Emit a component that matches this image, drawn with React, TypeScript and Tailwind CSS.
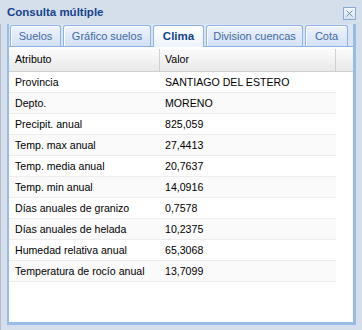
import { X } from "lucide-react";

const rows: [string, string][] = [
  ["Provincia", "SANTIAGO DEL ESTERO"],
  ["Depto.", "MORENO"],
  ["Precipit. anual", "825,059"],
  ["Temp. max anual", "27,4413"],
  ["Temp. media anual", "20,7637"],
  ["Temp. min anual", "14,0916"],
  ["Días anuales de granizo", "0,7578"],
  ["Días anuales de helada", "10,2375"],
  ["Humedad relativa anual", "65,3068"],
  ["Temperatura de rocío anual", "13,7099"],
];

const tabs = [
  { label: "Suelos", w: "w-[51px]" },
  { label: "Gráfico suelos", w: "w-[88px]" },
  { label: "Clima", w: "w-[51px]", active: true },
  { label: "Division cuencas", w: "w-[97px]" },
  { label: "Cota", w: "w-[43px]" },
];

export default function App() {
  return (
    <div className="flex h-[330px] w-[362px] flex-col bg-[#d5dfeb] font-['Liberation_Sans',Arial,sans-serif] text-[11px] text-black">
      {/* window header */}
      <div className="flex h-[24px] items-center justify-between pl-[7px] pr-[6px] pt-[2px]">
        <span className="text-[11.5px] font-bold text-[#15428b]">Consulta múltiple</span>
        <button className="flex h-[13px] w-[13px] items-center justify-center border border-[#8aa8d0] bg-gradient-to-b from-[#f3f7fd] to-[#d5e2f3]">
          <X size={11} strokeWidth={1.6} className="text-[#4b6a94]" />
        </button>
      </div>

      <div className="flex flex-1 border-l border-[#b3bcc8] pb-[5px] pl-[6px] pr-[6px]">
        <div className="flex flex-1 flex-col border-b-[3px] border-l-2 border-r-[3px] border-[#99bbe8]">
          {/* tab strip */}
          <div className="flex h-[23px] items-end gap-[2px] border-b border-[#8db2e3] bg-[#dae5f3] pl-[1px]">
            {tabs.map((t) =>
              t.active ? (
                <div
                  key={t.label}
                  className={`${t.w} -mb-px flex h-[22px] items-center justify-center rounded-t-[3px] border border-b-0 border-[#8db2e3] bg-gradient-to-b from-white to-[#edf3fc] text-[11.5px] font-bold text-[#15428b]`}
                >
                  {t.label}
                </div>
              ) : (
                <div
                  key={t.label}
                  className={`${t.w} flex h-[21px] items-center justify-center rounded-t-[3px] border border-b-0 border-[#8db2e3] bg-gradient-to-b from-[#eef3fb] to-[#d3e1f4] text-[#416aa3] shadow-[inset_1px_1px_0_#fff]`}
                >
                  {t.label}
                </div>
              )
            )}
          </div>

          {/* grid */}
          <div className="flex-1 bg-white pt-[2px] text-[10.6px]">
            <div className="flex h-[23px] border-b border-[#d0d0d0] bg-gradient-to-b from-[#fbfbfb] to-[#e9e9e9]">
              <div className="flex w-[151px] items-center border-r border-[#d0d0d0] pl-[6px]">Atributo</div>
              <div className="flex w-[176px] items-center border-r border-[#d0d0d0] pl-[5px]">Valor</div>
            </div>
            {rows.map(([a, v], i) => (
              <div
                key={a}
                className={`flex h-[21px] w-[327px] items-center border-b border-[#ededed] pt-px ${i % 2 ? "bg-[#fafafa]" : "bg-white"}`}
              >
                <div className="w-[151px] pl-[6px]">{a}</div>
                <div className="w-[176px] pl-[5px]">{v}</div>
              </div>
            ))}
          </div>
        </div>
      </div>
    </div>
  );
}
